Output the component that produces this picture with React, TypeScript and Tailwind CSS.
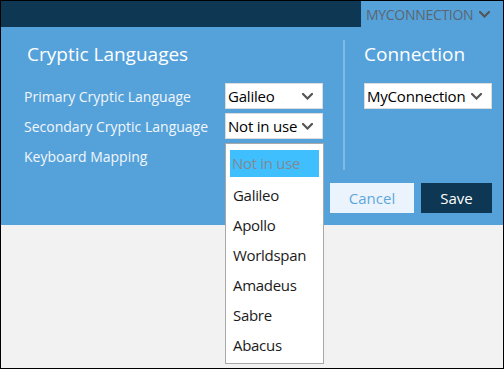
import React from "react";

function Chevron({ className = "" }: { className?: string }) {
  return (
    <svg width="11" height="7" viewBox="0 0 11 7" className={`shrink-0 ${className}`}>
      <polyline points="1,1 5.5,5.5 10,1" fill="none" stroke="#555" strokeWidth="2.2" strokeLinecap="square" />
    </svg>
  );
}

function Select({ value, w }: { value: string; w: string }) {
  return (
    <div className={`${w} shrink-0 h-[26px] bg-white border border-[#dcdcdc] flex items-center justify-between pl-[2px] pr-[9px]`}>
      <span className="text-[15px] text-black leading-none tracking-[-0.2px]">{value}</span>
      <Chevron />
    </div>
  );
}

export default function App() {
  const items = ["Galileo", "Apollo", "Worldspan", "Amadeus", "Sabre", "Abacus"];
  return (
    <div className="w-[504px] h-[369px] border border-black bg-[#f2f2f2] relative font-['Open_Sans',sans-serif] overflow-hidden">
      <div className="h-[26px] bg-[#0d3752] flex justify-end">
        <div className="w-[142px] bg-[#55a2db] flex items-center pl-[5px] gap-[6px]">
          <span className="text-[14px] text-[#5b6670] tracking-[-0.3px]">MYCONNECTION</span>
          <Chevron />
        </div>
      </div>
      <div className="h-[198px] bg-[#55a2db] flex flex-col">
        <div className="flex h-[156px]">
          <div className="w-[342px] shrink-0 pl-[23px]">
            <div className="h-[56px] pt-[14px] pl-[3px] text-[19px] text-white leading-[26px]">Cryptic Languages</div>
            <div className="flex flex-col gap-[4px]">
              <div className="flex items-center h-[26px]">
                <span className="w-[201px] shrink-0 text-[14px] text-[#f2f6fa]">Primary Cryptic Language</span>
                <Select value="Galileo" w="w-[98px]" />
              </div>
              <div className="flex items-center h-[26px]">
                <span className="w-[201px] shrink-0 text-[14px] text-[#f2f6fa]">Secondary Cryptic Language</span>
                <Select value="Not in use" w="w-[98px]" />
              </div>
              <div className="flex items-center h-[26px]">
                <span className="w-[201px] shrink-0 text-[14px] text-[#f2f6fa]">Keyboard Mapping</span>
              </div>
            </div>
          </div>
          <div className="mt-[13px] w-[2px] h-[130px] bg-[#80bbe6]" />
          <div className="pl-[19px]">
            <div className="h-[56px] pt-[14px] text-[19px] text-white leading-[26px]">Connection</div>
            <Select value="MyConnection" w="w-[128px]" />
          </div>
        </div>
        <div className="flex justify-end gap-[7px] pr-[11px]">
          <button className="w-[84px] h-[30px] bg-[#ebf4fc] text-[#5ea7dc] text-[15px]">Cancel</button>
          <button className="w-[71px] h-[30px] bg-[#0d3752] text-white text-[15px]">Save</button>
        </div>
      </div>
      <div className="absolute left-[224px] top-[142px] w-[99px] h-[221px] bg-white border border-[#a8a8a8] pt-[6px] px-[4px]">
        <div className="h-[27px] mb-[3px] bg-[#40bfff] flex items-center pl-[2px] text-[15px] text-[#7f8a93] tracking-[-0.3px]">Not in use</div>
        {items.map((it) => (
          <div key={it} className="h-[30px] flex items-center pl-[3px] text-[15px] text-[#1a1a1a] tracking-[-0.3px]">{it}</div>
        ))}
      </div>
    </div>
  );
}
